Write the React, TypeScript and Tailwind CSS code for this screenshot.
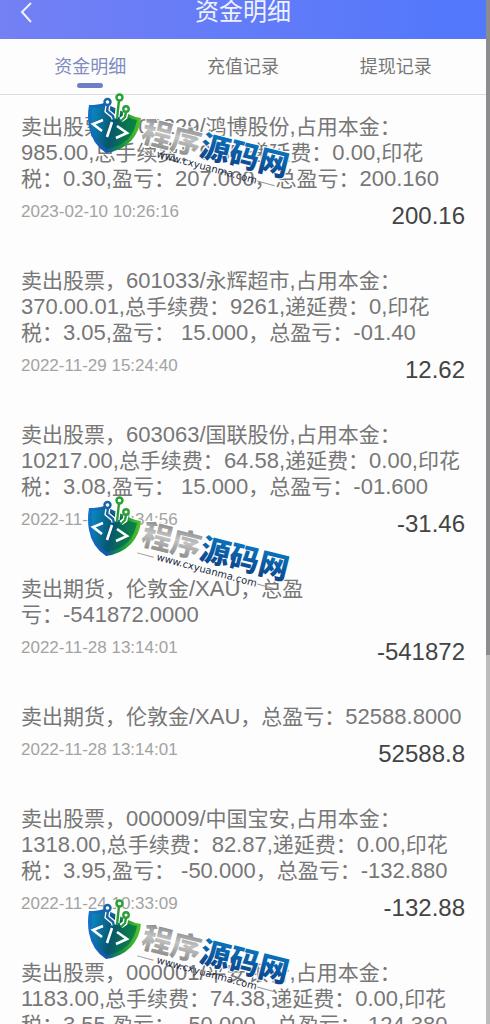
import { ReactNode } from 'react'

interface RecordItem {
  lines: string[]
  time: string
  amount: string
}

const tabs = ['资金明细', '充值记录', '提现记录']

const records: RecordItem[] = [
  {
    lines: [
      '卖出股票，002229/鸿博股份,占用本金：',
      '985.00,总手续费：9.85,递延费：0.00,印花',
      '税：0.30,盈亏：207.000，总盈亏：200.160',
    ],
    time: '2023-02-10 10:26:16',
    amount: '200.16',
  },
  {
    lines: [
      '卖出股票，601033/永辉超市,占用本金：',
      '370.00.01,总手续费：9261,递延费：0,印花',
      '税：3.05,盈亏： 15.000，总盈亏：-01.40',
    ],
    time: '2022-11-29 15:24:40',
    amount: '12.62',
  },
  {
    lines: [
      '卖出股票，603063/国联股份,占用本金：',
      '10217.00,总手续费：64.58,递延费：0.00,印花',
      '税：3.08,盈亏： 15.000，总盈亏：-01.600',
    ],
    time: '2022-11-28 13:34:56',
    amount: '-31.46',
  },
  {
    lines: ['卖出期货，伦敦金/XAU，总盈', '亏：-541872.0000'],
    time: '2022-11-28 13:14:01',
    amount: '-541872',
  },
  {
    lines: ['卖出期货，伦敦金/XAU，总盈亏：52588.8000'],
    time: '2022-11-28 13:14:01',
    amount: '52588.8',
  },
  {
    lines: [
      '卖出股票，000009/中国宝安,占用本金：',
      '1318.00,总手续费：82.87,递延费：0.00,印花',
      '税：3.95,盈亏： -50.000，总盈亏：-132.880',
    ],
    time: '2022-11-24 10:33:09',
    amount: '-132.88',
  },
  {
    lines: [
      '卖出股票，000001/平安银行,占用本金：',
      '1183.00,总手续费：74.38,递延费：0.00,印花',
      '税：3.55,盈亏： -50.000，总盈亏：-124.380',
    ],
    time: '2022-11-24 10:32:41',
    amount: '-124.38',
  },
]

// Latin runs are set one pixel larger than the Chinese around them
function mixedText(text: string): ReactNode[] {
  return text.split(/([\x20-\x7e]+)/).map((part, index) =>
    index % 2 === 1 ? (
      <span key={index} className="text-[22px]">
        {part}
      </span>
    ) : (
      part
    ),
  )
}

function Record({ lines, time, amount }: RecordItem) {
  return (
    <li className="px-[21px] pt-[19px] pb-[17px]">
      <p className="text-[21px] leading-[26px] whitespace-nowrap text-[#777]">
        {lines.map((line) => (
          <span key={line} className="block h-[26px]">
            {mixedText(line)}
          </span>
        ))}
      </p>
      <div className="flex items-start justify-between pt-2">
        <time className="text-[17px] leading-6 text-[#a3a3a3]">{time}</time>
        <span className="text-2xl leading-8 text-[#444]">{amount}</span>
      </div>
    </li>
  )
}

function Watermark({ className, id }: { className: string; id: string }) {
  return (
    <svg
      className={`pointer-events-none absolute left-20 ${className}`}
      width="230"
      height="110"
      viewBox="0 0 230 110"
      aria-hidden="true"
    >
      <defs>
        <linearGradient id={`${id}-edge`} x1="0" y1="0.4" x2="1" y2="0.5">
          <stop offset="0" stopColor="#1273c4" />
          <stop offset="0.4" stopColor="#1257a8" />
          <stop offset="0.65" stopColor="#12913f" />
          <stop offset="1" stopColor="#5cc52c" />
        </linearGradient>
        <linearGradient id={`${id}-shield`} x1="0" y1="0.3" x2="1" y2="0.5">
          <stop offset="0" stopColor="#0a84bd" />
          <stop offset="0.45" stopColor="#07566f" />
          <stop offset="1" stopColor="#0b8a3a" />
        </linearGradient>
        <linearGradient id={`${id}-silver`} x1="0" y1="0" x2="0" y2="1">
          <stop offset="0.1" stopColor="#777" />
          <stop offset="0.5" stopColor="#c4c4c4" />
          <stop offset="0.9" stopColor="#888" />
        </linearGradient>
        <linearGradient id={`${id}-blue`} x1="0" y1="0" x2="0" y2="1">
          <stop offset="0.1" stopColor="#0b7cc6" />
          <stop offset="0.9" stopColor="#0c4288" />
        </linearGradient>
      </defs>
      <path
        d="M9 18 Q18 18 24 16 L48 27 Q54 30 61 31 Q60 44 51 54 Q41 64 26 66 Q12 57 9 40 Q7 29 9 18Z"
        fill={`url(#${id}-edge)`}
      />
      <path
        d="M12 21 Q19 21 24 19 L47 30 Q52 33 57 33 Q55 44 48 52 Q39 60 27 62 Q15 54 12 40Z"
        fill={`url(#${id}-shield)`}
      />
      <path
        d="M28 18 L27 24 L33 29 L34 32 M39 13 L37 30 M46 25 L45 30 L41 33"
        fill="none"
        stroke="#fff"
        strokeWidth="5"
      />
      <g fill="none" stroke="#27a035" strokeWidth="2.4">
        <path d="M39 13 L37 32 M46 25 L45 30 L41 34" />
        <circle cx="39.5" cy="10.5" r="3" fill="#fff" />
        <circle cx="46" cy="22" r="2.7" fill="#fff" />
      </g>
      <g fill="none" stroke="#1765a8" strokeWidth="2.4">
        <path d="M28 18 L27 24 L33 29 L34 33" />
        <circle cx="27.5" cy="15" r="3" fill="#fff" />
      </g>
      <path
        d="M23 33 L13 37 L22 44 M32 35 L27 50 M37 39 L47 46 L36 51"
        fill="none"
        stroke="#fff"
        strokeWidth="2.6"
      />
      <g
        transform="translate(60 54) rotate(14)"
        fontFamily="'Noto Sans CJK SC', sans-serif"
        fontWeight="900"
        fontSize="30"
        stroke="#fff"
        strokeWidth="2"
        paintOrder="stroke"
      >
        <text fill={`url(#${id}-silver)`}>程序</text>
        <text x="60" fill={`url(#${id}-blue)`}>
          源码网
        </text>
      </g>
      <g transform="translate(76 70) rotate(15)">
        <path d="M-20 -2 H-3 M104 -3 H122" stroke="#999" />
        <text
          fontFamily="'DejaVu Sans', sans-serif"
          fontSize="10"
          fill="#1c2b3f"
        >
          www.cxyuanma.com
        </text>
      </g>
    </svg>
  )
}

export default function App() {
  return (
    <div className="relative flex h-screen overflow-hidden bg-[#fdfdfd] font-['Liberation_Sans','Noto_Sans_CJK_SC',sans-serif]">
      <main className="min-w-0 flex-1">
        <header className="grid h-[39px] grid-cols-3 items-start bg-linear-to-r from-[#7480f4] to-[#5478fb] to-90% text-[#eef1ff]">
          <button className="h-6 w-10 pl-[18px]" aria-label="返回">
            <svg
              width="16"
              height="24"
              viewBox="0 0 16 24"
              fill="none"
              stroke="currentColor"
              strokeWidth="2"
            >
              <path d="M13 3 L4 12 L13 22" />
            </svg>
          </button>
          <h1 className="text-center text-2xl leading-6">资金明细</h1>
        </header>
        <nav className="grid h-14 grid-cols-3 border-b border-[#ddd] px-[14px]">
          {tabs.map((tab, index) => (
            <button
              key={tab}
              className={
                index === 0
                  ? 'flex flex-col items-center pt-4 text-lg leading-6 text-[#7f8cc0]'
                  : 'flex flex-col items-center pt-4 text-lg leading-6 text-[#777]'
              }
            >
              {tab}
              {index === 0 && (
                <span className="mt-1 h-[5px] w-[26px] rounded-full bg-[#6d7fc8]" />
              )}
            </button>
          ))}
        </nav>
        <ul>
          {records.map((record) => (
            <Record key={record.lines[0]} {...record} />
          ))}
        </ul>
      </main>
      <div className="w-1 bg-[#bbb]">
        <div className="h-[64%] bg-[#8c8c8e]" />
      </div>
      <Watermark id="mark-a" className="top-[87px]" />
      <Watermark id="mark-b" className="top-[490px]" />
      <Watermark id="mark-c" className="top-[893px]" />
    </div>
  )
}
